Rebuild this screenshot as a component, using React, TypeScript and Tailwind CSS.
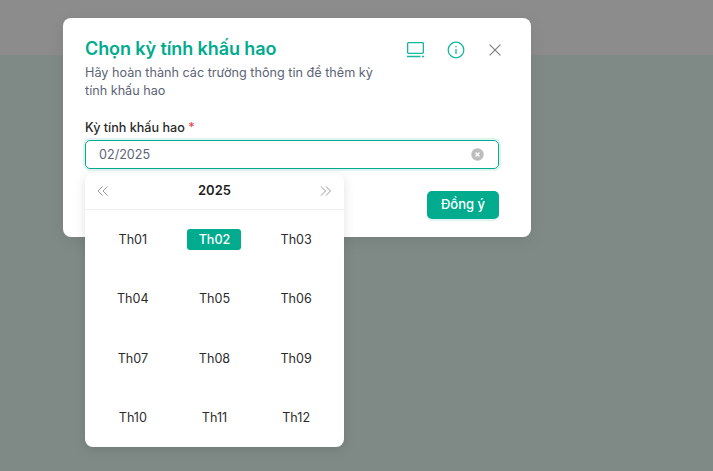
import React from "react";

const months = [
  "Th01", "Th02", "Th03",
  "Th04", "Th05", "Th06",
  "Th07", "Th08", "Th09",
  "Th10", "Th11", "Th12",
];

const LaptopIcon = () => (
  <svg width="19" height="16" viewBox="0 0 19 16" fill="none" stroke="#14b8a0" strokeWidth="1.3">
    <rect x="1.65" y="0.65" width="15.7" height="10.7" rx="0.8" />
    <path d="M1 14.5h13.5M16 14.5h2" />
  </svg>
);

const InfoIcon = () => (
  <svg width="18" height="18" viewBox="0 0 18 18" fill="none" stroke="#14b8a0" strokeWidth="1.3">
    <circle cx="9" cy="9" r="7.8" />
    <path d="M9 8v5" />
    <path d="M9 5v1.3" />
  </svg>
);

const CloseIcon = () => (
  <svg width="12" height="12" viewBox="0 0 12 12" fill="none" stroke="#808080" strokeWidth="1.2">
    <path d="M0.6 0.6l10.8 10.8M11.4 0.6L0.6 11.4" />
  </svg>
);

const ClearIcon = () => (
  <svg width="13" height="13" viewBox="0 0 13 13">
    <circle cx="6.5" cy="6.5" r="6.2" fill="#bdbdbd" />
    <path d="M4.5 4.5l4 4M8.5 4.5l-4 4" stroke="#fff" strokeWidth="1.3" fill="none" />
  </svg>
);

const DoubleChevron = ({ right }: { right?: boolean }) => (
  <svg width="12" height="10" viewBox="0 0 12 10" fill="none" stroke="#9a9a9a" strokeWidth="1">
    {right ? (
      <path d="M1 0.5l4.5 4.5L1 9.5M6 0.5l4.5 4.5L6 9.5" />
    ) : (
      <path d="M5.5 0.5L1 5l4.5 4.5M10.5 0.5L6 5l4.5 4.5" />
    )}
  </svg>
);

const MonthPicker = () => (
  <div className="absolute left-0 top-[33px] w-[259px] h-[274px] bg-white rounded-lg shadow-[0_3px_12px_rgba(0,0,0,0.12)] flex flex-col">
    <div className="h-[37px] shrink-0 flex items-center justify-between px-3 border-b border-[#eeeeee]">
      <DoubleChevron />
      <span className="text-[13px] font-semibold text-[#1f1f1f]">2025</span>
      <DoubleChevron right />
    </div>
    <div className="grid grid-cols-3 grid-rows-[59px_59px_60px_59px] px-[7px] pt-[1px]">
      {months.map((m) => (
        <div key={m} className="flex items-center justify-center">
          <span
            className={
              m === "Th02"
                ? "w-[54px] h-[21px] mb-[2px] pt-[2px] flex items-center justify-center rounded-[3px] bg-[#00ab8e] text-white text-[12.6px] font-medium"
                : "text-[12.6px] text-[#2b2b2b]"
            }
          >
            {m}
          </span>
        </div>
      ))}
    </div>
  </div>
);

export default function App() {
  return (
    <div className="relative w-[713px] h-[471px] overflow-hidden bg-[#7f8a86] font-['Inter',sans-serif]">
      <div className="h-[55px] bg-[#8c8c8c]" />

      <div className="absolute left-[63px] top-[18px] w-[468px] h-[219px] bg-white rounded-lg shadow-[0_4px_16px_rgba(0,0,0,0.08)] pt-[20px] pl-[22px] pr-[32px]">
        <div className="flex justify-between items-start">
          <div className="w-[310px]">
            <h2 className="text-[18px] leading-[22px] font-semibold text-[#00ab8e] tracking-[-0.1px]">Chọn kỳ tính khấu hao</h2>
            <p className="mt-[4px] text-[12.65px] leading-[18px] text-[#5c6477]">
              Hãy hoàn thành các trường thông tin để thêm kỳ tính khấu hao
            </p>
          </div>
          <div className="flex items-center gap-[22px] pt-[3px] mr-[-2px]">
            <LaptopIcon />
            <InfoIcon />
            <span className="ml-[2px]"><CloseIcon /></span>
          </div>
        </div>

        <label className="block mt-[19px] text-[12.6px] leading-[18px] font-medium text-[#2b2b2b]">
          Kỳ tính khấu hao <span className="text-[#ef4444]">*</span>
        </label>

        <div className="relative mt-[3px]">
          <div className="h-[29px] flex items-center justify-between pl-[13px] pr-[14px] rounded-[5px] border border-[#00ab8e] shadow-[0_0_0_2px_rgba(0,171,142,0.12)]">
            <span className="pt-[1px] text-[12.6px] text-[#5c6477]">02/2025</span>
            <ClearIcon />
          </div>
          <MonthPicker />
        </div>

        <div className="flex justify-end mt-[22px]">
          <button className="w-[72px] h-[28px] rounded-[5px] bg-[#00ab8e] text-white text-[13px] font-medium shadow-[0_2px_0_rgba(0,171,142,0.12)]">
            Đồng ý
          </button>
        </div>
      </div>
    </div>
  );
}
